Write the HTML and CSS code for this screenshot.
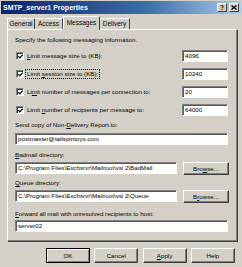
FILE: index.html
```html
<!DOCTYPE html>
<html lang="en">
<head>
    <meta charset="UTF-8">
    <title>SMTP_server1 Properties</title>
    <link rel="stylesheet" href="styles.css">
</head>
<body>
    <div class="window">
        <div class="titlebar">
            <span class="title">SMTP_server1 Properties</span>
            <div class="caption-buttons">
                <span class="cap-btn">?</span>
                <span class="cap-btn">
                    <svg width="6" height="5" viewBox="0 0 6 5"><path d="M0.5 0.5 L5.5 4.5 M5.5 0.5 L0.5 4.5" stroke="#000" stroke-width="1.3" fill="none"/></svg>
                </span>
            </div>
        </div>

        <div class="tabs">
            <div class="tab tab-general">General</div>
            <div class="tab tab-access">Access</div>
            <div class="tab tab-messages active">Messages</div>
            <div class="tab tab-delivery">Delivery</div>
        </div>

        <div class="panel">
            <p class="intro">Specify the following messaging information.</p>

            <div class="limit-row">
                <span class="check"><span class="box"><svg width="5" height="5" viewBox="0 0 5 5"><path d="M0.3 2.2 L1.8 3.8 L4.7 0.6" stroke="#000" stroke-width="1.2" fill="none"/></svg></span><span class="check-label"><u>L</u>imit message size to (KB):</span></span>
                <div class="field small">4096</div>
            </div>
            <div class="limit-row">
                <span class="check"><span class="box"><svg width="5" height="5" viewBox="0 0 5 5"><path d="M0.3 2.2 L1.8 3.8 L4.7 0.6" stroke="#000" stroke-width="1.2" fill="none"/></svg></span><span class="check-label focused">Limit <u>s</u>ession size to (KB):</span></span>
                <div class="field small">10240</div>
            </div>
            <div class="limit-row">
                <span class="check"><span class="box"><svg width="5" height="5" viewBox="0 0 5 5"><path d="M0.3 2.2 L1.8 3.8 L4.7 0.6" stroke="#000" stroke-width="1.2" fill="none"/></svg></span><span class="check-label">Li<u>m</u>it number of messages per connection to:</span></span>
                <div class="field small">20</div>
            </div>
            <div class="limit-row">
                <span class="check"><span class="box"><svg width="5" height="5" viewBox="0 0 5 5"><path d="M0.3 2.2 L1.8 3.8 L4.7 0.6" stroke="#000" stroke-width="1.2" fill="none"/></svg></span><span class="check-label">Limit <u>n</u>umber of recipients per message to:</span></span>
                <div class="field small">64000</div>
            </div>

            <div class="label label-send">Send copy of Non-<u>D</u>elivery Report to:</div>
            <div class="field wide">postmaster@tailspintoys.com</div>

            <div class="label label-badmail"><u>B</u>admail directory:</div>
            <div class="dir-row">
                <div class="field path">C:\Program Files\Exchsrvr\Mailroot\vsi 2\BadMail</div>
                <div class="btn browse">Bro<u>w</u>se...</div>
            </div>

            <div class="label label-queue"><u>Q</u>ueue directory:</div>
            <div class="dir-row">
                <div class="field path">C:\Program Files\Exchsrvr\Mailroot\vsi 2\Queue</div>
                <div class="btn browse">B<u>r</u>owse...</div>
            </div>

            <div class="label label-forward"><u>F</u>orward all mail with unresolved recipients to host:</div>
            <div class="field wide forward">server02</div>
        </div>

        <div class="buttons">
            <div class="btn default">OK</div>
            <div class="btn">Cancel</div>
            <div class="btn"><u>A</u>pply</div>
            <div class="btn">Help</div>
        </div>
    </div>
</body>
</html>
```

FILE: styles.css
```css
body {
    margin: 0;
    background: #d4d0c8;
    font-family: "Liberation Sans", Arial, sans-serif;
    font-size: 6.2px;
    color: #000;
}
.window {
    width: 242px;
    height: 267px;
    background: #d4d0c8;
    overflow: hidden;
}
.titlebar {
    margin: 1px 1px 0 1px;
    height: 13px;
    background: linear-gradient(to right, #0a246a, #3a6ea5 60%, #a6caf0);
    display: flex;
    align-items: center;
    justify-content: space-between;
}
.title {
    color: #fff;
    font-weight: bold;
    font-size: 7px;
    padding-left: 2px;
}
.caption-buttons {
    display: flex;
    gap: 2px;
    margin-right: 2px;
}
.cap-btn {
    width: 8px;
    height: 7px;
    background: #d4d0c8;
    border: 1px solid;
    border-color: #fff #404040 #404040 #fff;
    font-size: 6.5px;
    font-weight: bold;
    line-height: 7px;
    text-align: center;
    display: flex;
    align-items: center;
    justify-content: center;
}
.tabs {
    display: flex;
    align-items: flex-end;
    height: 15px;
    padding-left: 7px;
    position: relative;
    z-index: 1;
}
.tab {
    height: 10px;
    line-height: 10px;
    font-size: 6.5px;
    text-align: center;
    border-top: 1px solid #fff;
    border-left: 1px solid #fff;
    border-right: 1px solid #404040;
    box-sizing: content-box;
    border-radius: 1px 1px 0 0;
}
.tab-general { width: 26px; }
.tab-access { width: 26px; border-left: none; width: 27px; }
.tab-messages { width: 35px; }
.tab-delivery { width: 28px; border-left: none; width: 29px; }
.tab.active {
    height: 13px;
    line-height: 12px;
    margin-bottom: -1px;
    background: #d4d0c8;
}
.panel {
    margin-left: 7px;
    width: 230px;
    height: 212px;
    box-sizing: border-box;
    border: 1px solid;
    border-color: #fff #808080 #808080 #fff;
    box-shadow: 1px 1px 0 #404040;
    padding: 0 8px 0 7px;
}
.intro {
    margin: 6px 0 0 0;
    line-height: 8px;
}
.limit-row {
    margin-top: 6px;
    height: 12px;
    display: flex;
    align-items: center;
    justify-content: space-between;
}
.check {
    display: flex;
    align-items: center;
    margin-left: 1px;
}
.box {
    width: 6px;
    height: 6px;
    background: #fff;
    border: 1px solid;
    border-color: #808080 #fff #fff #808080;
    box-shadow: inset 1px 1px 0 #404040;
    margin-right: 3px;
    display: flex;
    align-items: center;
    justify-content: center;
}
.check-label {
    line-height: 8px;
    padding: 0 1px;
    margin-left: -1px;
}
.check-label.focused {
    outline: 1px dotted #000;
}
.field {
    height: 12px;
    box-sizing: border-box;
    background: #fff;
    border: 1px solid;
    border-color: #808080 #fff #fff #808080;
    box-shadow: inset 1px 1px 0 #5a5a5a;
    padding-left: 2px;
    line-height: 10px;
    white-space: nowrap;
    overflow: hidden;
}
.field.small {
    width: 46px;
}
.field.wide {
    width: 213px;
    margin-top: 4px;
}
.field.forward {
    margin-top: 2px;
}
.label {
    line-height: 8px;
}
.label-send { margin-top: 5px; }
.label-badmail { margin-top: 6px; }
.label-queue { margin-top: 4px; }
.label-forward { margin-top: 7px; }
.dir-row {
    margin-top: 2px;
    height: 14px;
    display: flex;
    align-items: center;
    justify-content: space-between;
}
.field.path {
    width: 162px;
}
.btn {
    box-sizing: border-box;
    border: 1px solid;
    border-color: #fff #404040 #404040 #fff;
    box-shadow: inset -1px -1px 0 #808080;
    background: #d4d0c8;
    text-align: center;
}
.browse {
    width: 46px;
    height: 13px;
    line-height: 11px;
    margin-right: -1px;
}
.buttons {
    margin-top: 7px;
    padding-left: 46px;
    display: flex;
    gap: 4.3px;
}
.buttons .btn {
    width: 44px;
    height: 15px;
    line-height: 13px;
}
.btn.default {
    border-color: #000;
    box-shadow: inset 1px 1px 0 #fff, inset -1px -1px 0 #808080;
}
```
